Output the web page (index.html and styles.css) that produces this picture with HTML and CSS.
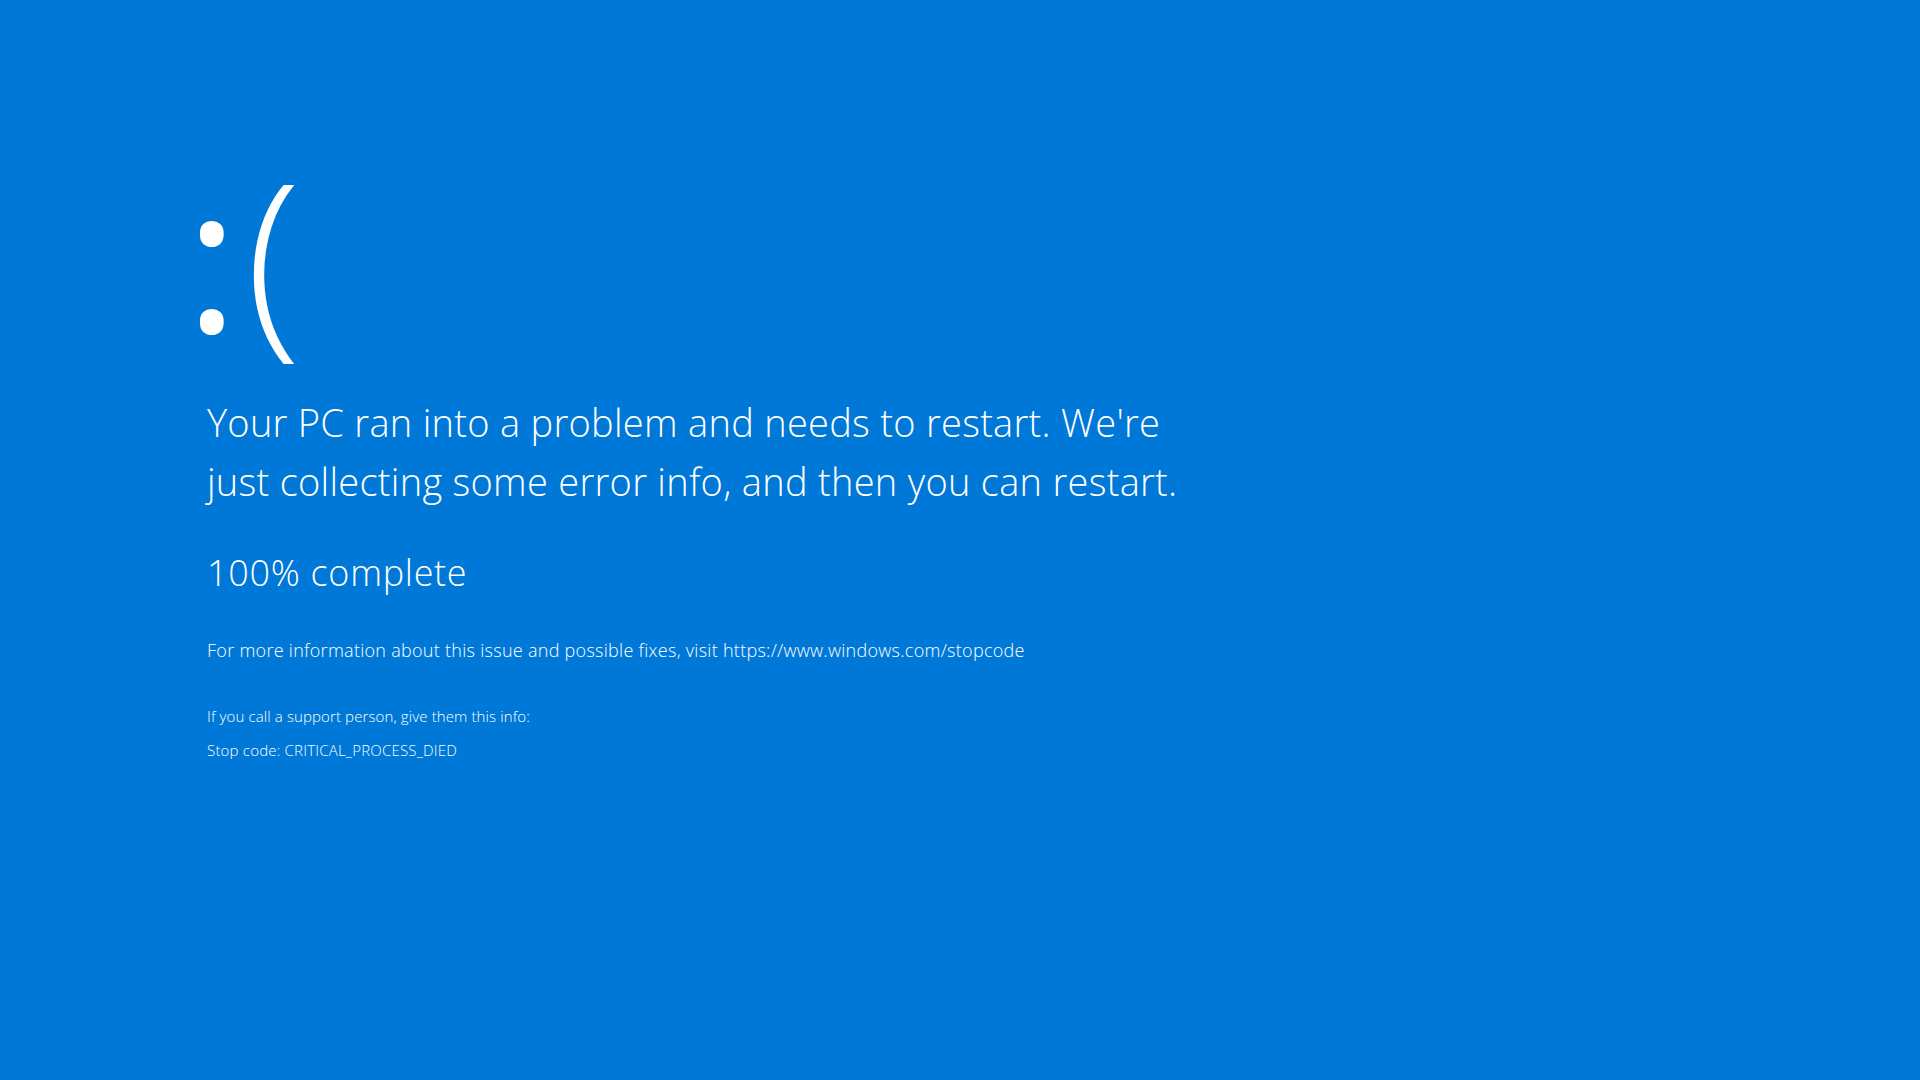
FILE: index.html
```html
<!DOCTYPE html>
<html>
<head>
    <title>Your PC ran into a problem</title>
    <link rel="stylesheet" href="styles.css">
</head>
<body>
    <div class="screen">
        <div class="face"><span class="eyes">:</span>(</div>
        <p class="message">Your PC ran into a problem and needs to restart. We're<br>just collecting some error info, and then you can restart.</p>
        <p class="progress"><span id="percent">100</span>% complete</p>
        <p class="info">For more information about this issue and possible fixes, visit https://www.windows.com/stopcode</p>
        <p class="support">If you call a support person, give them this info:</p>
        <p class="support stop">Stop code: CRITICAL_PROCESS_DIED</p>
    </div>
</body>
</html>
```

FILE: styles.css
```css
html, body {
    margin: 0;
    height: 100%;
}
body {
    background: #0078d7;
    color: #fff;
    font-family: "Open Sans", "Noto Sans", sans-serif;
    font-weight: 300;
}
.screen {
    padding: 151px 0 0 207px;
}
.face {
    font-size: 204px;
    line-height: 1;
    height: 206px;
    margin-left: -22px;
}
.eyes {
    font-weight: 400;
    margin-right: 7px;
}
p {
    margin: 0;
}
.message {
    font-size: 38px;
    line-height: 59px;
    margin-top: 36px;
    letter-spacing: 0.28px;
}
.progress {
    font-size: 36px;
    line-height: 50px;
    margin-top: 37px;
    letter-spacing: 0.7px;
}
.info {
    font-size: 18px;
    line-height: 24px;
    margin-top: 40px;
    letter-spacing: 0.28px;
}
.support {
    font-size: 15px;
    line-height: 20px;
    margin-top: 44px;
    letter-spacing: 0.12px;
}
.stop {
    margin-top: 14px;
    letter-spacing: 0.2px;
}
```
